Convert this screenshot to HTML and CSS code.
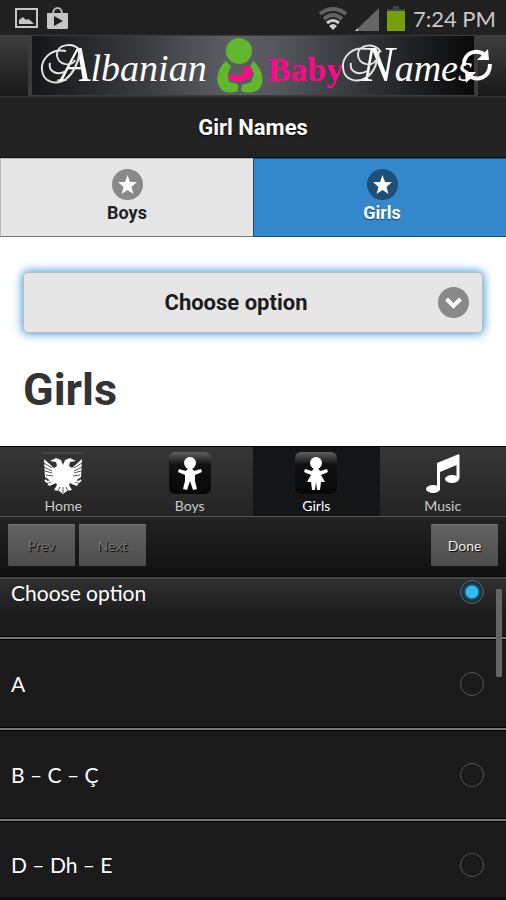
FILE: index.html
```html
<!DOCTYPE html>
<html lang="en">
<head>
<meta charset="utf-8">
<meta name="viewport" content="width=device-width, initial-scale=1">
<title>Albanian Baby Names</title>
<link rel="stylesheet" href="styles.css">
</head>
<body>
<div class="status">
  <div class="status-group">
    <svg width="23" height="21" viewBox="0 0 23 21"><path fill="none" stroke="#c6c6c6" stroke-width="2" d="M1 1h21v18H1z"/><path fill="#c6c6c6" d="M4 16v-4l4-3 3 3 2-1 3 2 3 3z"/></svg>
    <svg width="23" height="23" viewBox="0 0 23 23"><path fill="none" stroke="#b8b8b8" stroke-width="2" d="M7 7C7-1 16-1 16 7"/><path fill="#c6c6c6" d="M1 6h21v15l-1 1H2l-1-1z"/><path fill="#202020" d="M8 9v10l9-5z"/></svg>
  </div>
  <div class="status-group">
    <svg width="28" height="24" viewBox="0 0 28 24" fill="none" stroke-width="4"><path stroke="#626262" d="M1 7Q14-3 27 7M5 12Q14 4 23 12"/><path stroke="#ccc" stroke-width="3" d="M8 16q6-5 12 0"/><path fill="#ccc" d="M14 23l-4-4q4-4 8 0z"/></svg>
    <svg width="24" height="24" viewBox="0 0 24 24"><path fill="#666" d="M24 1v23H0z"/><path fill="#ccc" d="M0 24l3-3v3z"/></svg>
    <svg width="18" height="25" viewBox="0 0 18 25"><path fill="#444" d="M6 0h6v3h6v2H0V3h6z"/><path fill="#759f0b" d="M0 5h18v20H0z"/></svg>
    <time class="clock">7:24 PM</time>
  </div>
</div>

<header class="banner">
  <div class="logo">
    <span class="script"><svg class="swirl" width="48" height="48" viewBox="0 0 48 48"><path d="M40 6C32-2 17 0 17 11c0 9 14 13 18 5M26 7C10 4 1 16 2 26c1 12 14 16 24 9 8-6 12-16 14-28M10 19c-2 9 8 13 16 8"/></svg>A<small>lbanian</small></span>
    <svg class="figure" width="46" height="56" viewBox="0 0 46 56"><circle cx="22" cy="13" r="13" fill="#62b62d"/><path fill="#62b62d" d="M9 23C-1 32-3 45 6 53q8 3 15 0v-6l-3-2-6-1-1-8 3-8zM36 23c12 10 12 26 3 30q-7 3-15 0l1-6 9-3 3-8-4-7z"/><path fill="#f90d83" d="M12 37c6-2 9 2 14-1l2-2-3-2 1-3 6-1c4 2 5 8 1 11-5 6-13 5-20 3-2-2-2-4-1-5z"/></svg>
    <span class="baby">Baby</span>
    <span class="script"><svg class="swirl" width="48" height="48" viewBox="0 0 48 48"><path d="M40 8C34-2 17 0 17 11c0 9 14 13 18 5M26 5C10 2 1 14 2 24c1 12 14 16 24 9 8-6 10-14 12-26M10 19c-2 9 8 13 16 8"/></svg>N<small>ames</small></span>
  </div>
  <button class="refresh" aria-label="Refresh"><svg width="32" height="34" viewBox="0 0 32 34"><path fill="none" stroke="#fff" stroke-width="4" d="M3 17C2 4 15-1 24 6M29 15c0 14-13 18-22 11"/><path fill="#fff" d="M27 0l1 11H16zM5 34L4 23h11z"/></svg></button>
</header>

<h1 class="title">Girl Names</h1>
<nav class="tabs">
  <a href="#boys" class="tab"><svg width="31" height="31" viewBox="0 0 31 31"><circle cx="15.500" cy="15.500" r="15.500" fill="#898989"/><path fill="#fff" d="M15.500 6l2.500 7h7l-5.500 5 2 7-6-4-6 4 2-7L6 13h7z"/></svg>Boys</a>
  <a href="#girls" class="tab active"><svg width="31" height="31" viewBox="0 0 31 31"><circle cx="15.500" cy="15.500" r="15.500" fill="#1e4f78"/><path fill="#fff" d="M15.500 6l2.500 7h7l-5.500 5 2 7-6-4-6 4 2-7L6 13h7z"/></svg>Girls</a>
</nav>

<main class="content">
  <div class="picker">
    <select aria-label="Choose option"><option>Choose option</option><option>A</option><option>B – C – Ç</option><option>D – Dh – E</option></select>
    <svg class="chevron" width="31" height="31" viewBox="0 0 31 31"><circle cx="15.500" cy="15.500" r="15.500" fill="#898989"/><path fill="none" stroke="#fff" stroke-width="4" d="M8.500 12l7 7 7-7"/></svg>
  </div>
  <h2>Girls</h2>
</main>

<nav class="bar">
  <a href="#home"><svg width="42" height="42" viewBox="0 0 42 42"><path stroke="#555" d="M0 1h42"/><path fill="#fff" d="M21 13l-2-5-5-2-6 3 6 1 1 4-3 2L2 7l1 18 7 5-5 2 5 1 4-2 1 2-3 5 5 1 4 3 4-3 5-1-3-5 1-2 4 2 5-1-5-2 7-5 1-18-10 9-3-2 1-4 6-1-6-3-5 2z"/><path stroke="#555" fill="none" d="M2 11l8 5M2 15l8 4M3 19l7 2M4 23l7 1M40 11l-8 5M40 15l-8 4M39 19l-7 2M38 23l-7 1M18 35l-2 4M21 35v6M24 35l2 4"/><path stroke="#fff" stroke-width="2" fill="none" d="M13 28l-8 2-2-2M6 32l3 1M29 28l8 2 2-2M36 32l-3 1"/></svg>Home</a>
  <a href="#boys"><svg width="42" height="42" viewBox="0 0 42 42"><defs><linearGradient id="tile" x2="0" y2="1"><stop stop-color="#606060"/><stop offset=".3" stop-color="#111"/><stop offset="1" stop-color="#070707"/></linearGradient></defs><rect width="42" height="42" rx="6" fill="url(#tile)"/><circle cx="21" cy="11" r="6" fill="#fff"/><path fill="#fff" d="M19 16h4l2 3 7-2 1 3-7 3v6l2 8-4 1-3-9-3 9-4-1 2-8v-6l-7-3 1-3 7 2z"/></svg>Boys</a>
  <a href="#girls" class="current"><svg width="42" height="42" viewBox="0 0 42 42"><rect width="42" height="42" rx="6" fill="url(#tile)"/><circle cx="21" cy="11" r="6" fill="#fff"/><path fill="#fff" d="M19 16h4l2 3 7-2 1 3-7 3 4 7h-4l-1 8h-3l-1-8-1 8h-3l-1-8h-4l4-7-7-3 1-3 7 2z"/></svg>Girls</a>
  <a href="#music"><svg width="42" height="42" viewBox="0 0 42 42"><path fill="#fff" d="M15 11l22-9v10l-19 8v17h-3z"/><path stroke="#fff" stroke-width="3" d="M36 3v24"/><ellipse cx="11" cy="37" rx="7" ry="4" fill="#fff"/><ellipse cx="30" cy="27" rx="7" ry="4" fill="#fff"/></svg>Music</a>
</nav>

<div class="tools">
  <button disabled>Prev</button><button disabled>Next</button><button class="done">Done</button>
</div>

<div class="options">
  <label class="option first">Choose option<input type="radio" name="letter" checked></label>
  <label class="option">A<input type="radio" name="letter"></label>
  <label class="option">B – C – Ç<input type="radio" name="letter"></label>
  <label class="option last">D – Dh – E<input type="radio" name="letter"></label>
  <div class="thumb"></div>
</div>
</body>
</html>
```

FILE: styles.css
```css
* { box-sizing: border-box; }
body { margin: 0; min-height: 100vh; display: flex; flex-direction: column; background: #1a1a1a; font-family: Roboto, sans-serif; }
svg { display: block; flex: none; }
a { color: inherit; text-decoration: none; }
button { font: inherit; border: 0; padding: 0; }

.status { height: 35px; padding: 2px 10px 0 15px; display: flex; align-items: center; justify-content: space-between; background: #202020; }
.status-group { display: flex; align-items: center; gap: 8px; }
.clock { font: 22px/32px Lato, sans-serif; color: #c8c8c8; }

.banner { position: relative; height: 62px; padding: 0 28px; background: linear-gradient(#3e3e3e, #181818); border-bottom: 1px solid #333; }
.logo { height: 61px; padding-left: 28px; display: flex; align-items: center; border: 1px solid #393b3d; border-width: 1px 4px; background: linear-gradient(90deg, #151617, #393b3f 25%, #5b5f64 45%, #54585c 55%, #303236 76%, #090909); overflow: hidden; }
.script { position: relative; flex: none; font: italic 50px/56px "Liberation Serif", serif; color: #fff; }
.script small { font-size: 38px; }
.swirl { position: absolute; left: -20px; top: 8px; fill: none; stroke: #e4e4e4; stroke-width: 2px; }
.figure { flex: none; margin: 0 5px 0 10px; }
.baby { padding-top: 8px; font: bold 34px/48px "Liberation Serif", serif; color: #ff078a; }
.baby + .script { margin-left: 18px; }
.refresh { position: absolute; right: 13px; top: 14px; background: none; }

.title { margin: 0; height: 60px; font-size: 22px; line-height: 62px; text-align: center; color: #fff; background: #222; text-shadow: 0 1px 1px #000; }
.tabs { display: grid; grid-template-columns: 1fr 1fr; border-top: 1px solid #111; }
.tab { height: 79px; padding-top: 10px; display: flex; flex-direction: column; align-items: center; font-size: 18px; font-weight: bold; line-height: 26px; color: #222; background: #e6e6e6; border: 1px solid #b8b8b8; border-width: 1px 0 1px 1px; border-bottom-color: #777; }
.tab.active { padding-left: 4px; color: #fff; background: #3388cc; border-color: #194b73; text-shadow: 0 1px 1px #145; }

.content { padding: 35px 23px 28px; background: #fff; }
.picker { position: relative; }
select { appearance: none; display: block; width: 100%; height: 61px; padding: 0 58px 0 24px; border: 1px solid #bbb; border-radius: 5px; outline: 0; background: #e6e6e6; color: #1c1c1c; font: bold 22px Roboto, sans-serif; text-align-last: center; box-shadow: 0 0 10px 1px #3c9be0; }
.chevron { position: absolute; right: 14px; top: 15px; pointer-events: none; }
h2 { margin: 29px 0 0; font-size: 45px; line-height: 56px; color: #333; }

.bar { display: grid; grid-template-columns: repeat(4, 1fr); border-top: 1px solid #000; background: linear-gradient(#363636, #242424); font-family: Lato, sans-serif; }
.bar a { height: 69px; padding-top: 5px; display: flex; flex-direction: column; align-items: center; font-size: 14px; line-height: 24px; color: #ccc; }
.bar .current { color: #fff; background: #141517; }

.tools { height: 61px; padding: 7px 8px; display: flex; gap: 4px; border-top: 1px solid #555; border-bottom: 1px solid #080808; background: linear-gradient(#222, #111); }
.tools button { width: 67px; height: 42px; border-radius: 1px; color: #eee; background: linear-gradient(#626262, #4d4d4d); border-top: 1px solid #777; font: 14px Lato, sans-serif; text-shadow: 1px 1px 1px #000; }
.tools button:disabled { color: #777; }
.tools .done { margin-left: auto; }

.options { position: relative; flex: 1; border-top: 2px solid #444; border-bottom: 3px solid #110c10; }
.option { height: 91px; padding: 0 22px 0 11px; display: flex; align-items: center; justify-content: space-between; border-top: 2px solid #777; box-shadow: 0 -1px #000, inset 0 1px #000; font: 21px/26px Lato, sans-serif; color: #fff; }
.option.first { height: 58px; padding-top: 1px; align-items: flex-start; border-top: 0; box-shadow: none; background: linear-gradient(#303030, #1a1a1a 38px); }
.option.last { height: 78px; padding-top: 12px; }
input { appearance: none; flex: none; width: 24px; height: 24px; margin: 0; border: 1px solid #555; border-radius: 50%; }
input:checked { background: radial-gradient(circle, #38b9ee 6px, #145066 7px, #1c3038 10px, #222 12px); border-color: #666; }
.thumb { position: absolute; right: 4px; top: 10px; width: 6px; height: 88px; border-radius: 1px; background: #656565; }
```
